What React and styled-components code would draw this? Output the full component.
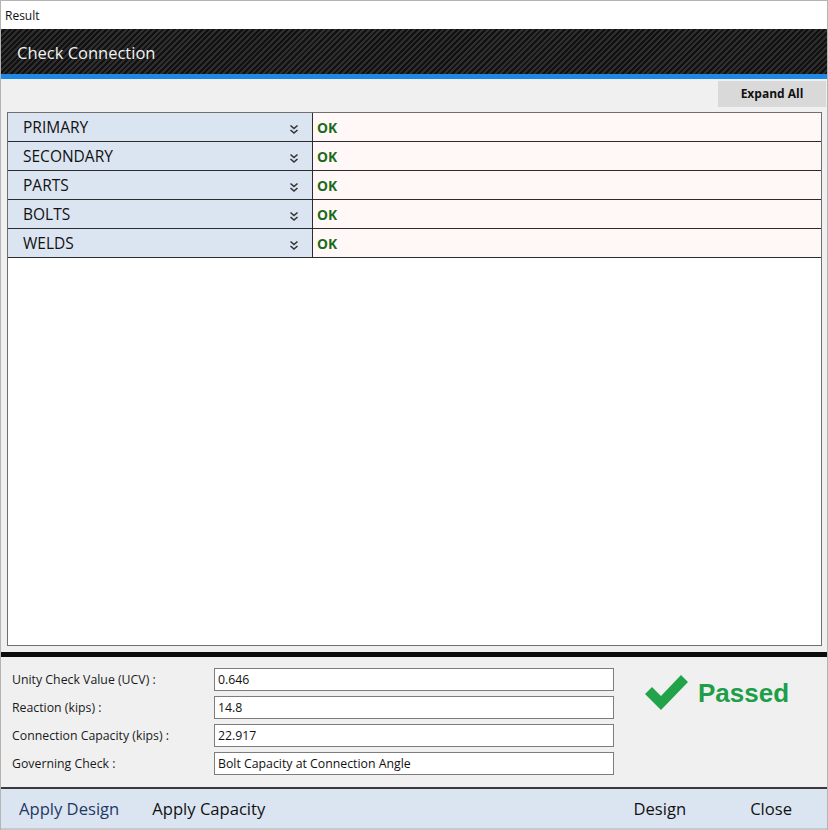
import styled, { createGlobalStyle } from "styled-components";

const Global = createGlobalStyle`
  html, body { margin: 0; padding: 0; background: #fff; }
  * { box-sizing: border-box; }
`;

const rows = ["PRIMARY", "SECONDARY", "PARTS", "BOLTS", "WELDS"];

const fields = [
  { label: "Unity Check Value (UCV) :", value: "0.646" },
  { label: "Reaction (kips) :", value: "14.8" },
  { label: "Connection Capacity (kips) :", value: "22.917" },
  { label: "Governing Check :", value: "Bolt Capacity at Connection Angle" },
];

const Chevrons = () => (
  <svg width="10" height="11" viewBox="0 0 10 11">
    <polyline points="1.5,1.5 5,4.5 8.5,1.5" fill="none" stroke="#333" strokeWidth="1.6" />
    <polyline points="1.5,6 5,9 8.5,6" fill="none" stroke="#333" strokeWidth="1.6" />
  </svg>
);

const Check = () => (
  <svg width="44" height="36" viewBox="0 0 44 36">
    <polygon points="0,19 7,12 16,21 36,0 43,7 16,35" fill="#22a34a" />
  </svg>
);

export default function App() {
  return (
    <>
      <Global />
      <Window>
        <TitleBar>Result</TitleBar>
        <Header>Check Connection</Header>
        <Toolbar>
          <ExpandButton>Expand All</ExpandButton>
        </Toolbar>
        <Panel>
          {rows.map((r) => (
            <Row key={r}>
              <NameCell>
                <span>{r}</span>
                <Chevrons />
              </NameCell>
              <StatusCell>OK</StatusCell>
            </Row>
          ))}
        </Panel>
        <Divider />
        <Summary>
          <Fields>
            {fields.map((f) => (
              <Field key={f.label}>
                <Label>{f.label}</Label>
                <Input readOnly value={f.value} />
              </Field>
            ))}
          </Fields>
          <Passed>
            <Check />
            <span>Passed</span>
          </Passed>
        </Summary>
        <ButtonBar>
          <BarButton $accent>Apply Design</BarButton>
          <BarButton>Apply Capacity</BarButton>
          <Spacer />
          <BarButton>Design</BarButton>
          <BarButton $wide>Close</BarButton>
        </ButtonBar>
      </Window>
    </>
  );
}

const Window = styled.div`
  width: 828px;
  height: 830px;
  display: flex;
  flex-direction: column;
  background: #f0f0f0;
  border: 1px solid #b4b4b4;
  border-bottom: none;
  font-family: "Open Sans", "Noto Sans", sans-serif;
  color: #111;
`;

const TitleBar = styled.div`
  height: 28px;
  background: #fff;
  display: flex;
  align-items: center;
  padding-left: 4px;
  font-size: 12px;
`;

const Header = styled.div`
  height: 50px;
  display: flex;
  align-items: center;
  padding: 2px 0 0 16px;
  font-size: 16.5px;
  color: #f2f2f2;
  background: repeating-linear-gradient(
    -45deg,
    #111 0px,
    #111 2px,
    #2e2e2e 2px,
    #2e2e2e 4px
  );
  border-bottom: 5px solid #1e88e5;
`;

const Toolbar = styled.div`
  height: 33px;
  display: flex;
  justify-content: flex-end;
  align-items: flex-start;
  padding: 2px 1px 0 0;
`;

const ExpandButton = styled.button`
  width: 108px;
  height: 26px;
  border: none;
  background: #d9d9d9;
  font-family: "Open Sans", "Noto Sans", sans-serif;
  font-weight: 700;
  font-size: 12px;
  color: #111;
  padding: 0 0 1px;
`;

const Panel = styled.div`
  flex: 1;
  margin: 0 5px 0 6px;
  background: #fff;
  border: 1px solid #6f6f6f;
  box-shadow: inset 0 0 0 1px #fff;
`;

const Row = styled.div`
  display: grid;
  grid-template-columns: 305px 1fr;
  height: 29px;
  border-bottom: 1.5px solid #2c2c2c;
`;

const NameCell = styled.div`
  display: flex;
  align-items: center;
  justify-content: space-between;
  padding: 0 13px 0 15px;
  background: #dbe5f1;
  border-right: 1.5px solid #2c2c2c;
  font-size: 15.5px;
  svg {
    margin-top: 4px;
  }
`;

const StatusCell = styled.div`
  display: flex;
  align-items: center;
  padding-left: 4px;
  background: #fff8f7;
  color: #1c6b1c;
  font-weight: 700;
  font-size: 13.8px;
`;

const Divider = styled.div`
  height: 5px;
  margin-top: 6px;
  background: #0c0c0c;
`;

const Summary = styled.div`
  height: 130px;
  display: flex;
  padding: 11px 0 0 11px;
`;

const Fields = styled.div`
  display: flex;
  flex-direction: column;
  gap: 5px;
`;

const Field = styled.div`
  display: flex;
  align-items: center;
`;

const Label = styled.div`
  width: 202px;
  font-size: 12.3px;
  color: #1a1a1a;
`;

const Input = styled.input`
  width: 400px;
  height: 23px;
  border: 1px solid #7d7d7d;
  background: #fff;
  font-family: "Open Sans", "Noto Sans", sans-serif;
  font-size: 12.3px;
  padding: 0 3px;
  color: #111;
  outline: none;
`;

const Passed = styled.div`
  display: flex;
  align-items: center;
  gap: 9px;
  margin: 7px 0 0 31px;
  height: 36px;
  span {
    font-family: "Liberation Sans", Arial, sans-serif;
    font-weight: 700;
    font-size: 26px;
    color: #1f9e49;
  }
`;

const ButtonBar = styled.div`
  flex: none;
  height: 43px;
  display: flex;
  align-items: center;
  padding: 0 0 1px 18px;
  background: #dbe5f1;
  border-top: 2px solid #3a3a3a;
  border-bottom: 2px solid #c8c8c8;
`;

const Spacer = styled.div`
  flex: 1;
`;

const BarButton = styled.div`
  font-size: 16.6px;
  color: ${(p) => (p.$accent ? "#1f3864" : "#111")};
  margin-right: ${(p) => (p.$accent ? "33px" : p.$wide ? "35px" : "64px")};
`;
